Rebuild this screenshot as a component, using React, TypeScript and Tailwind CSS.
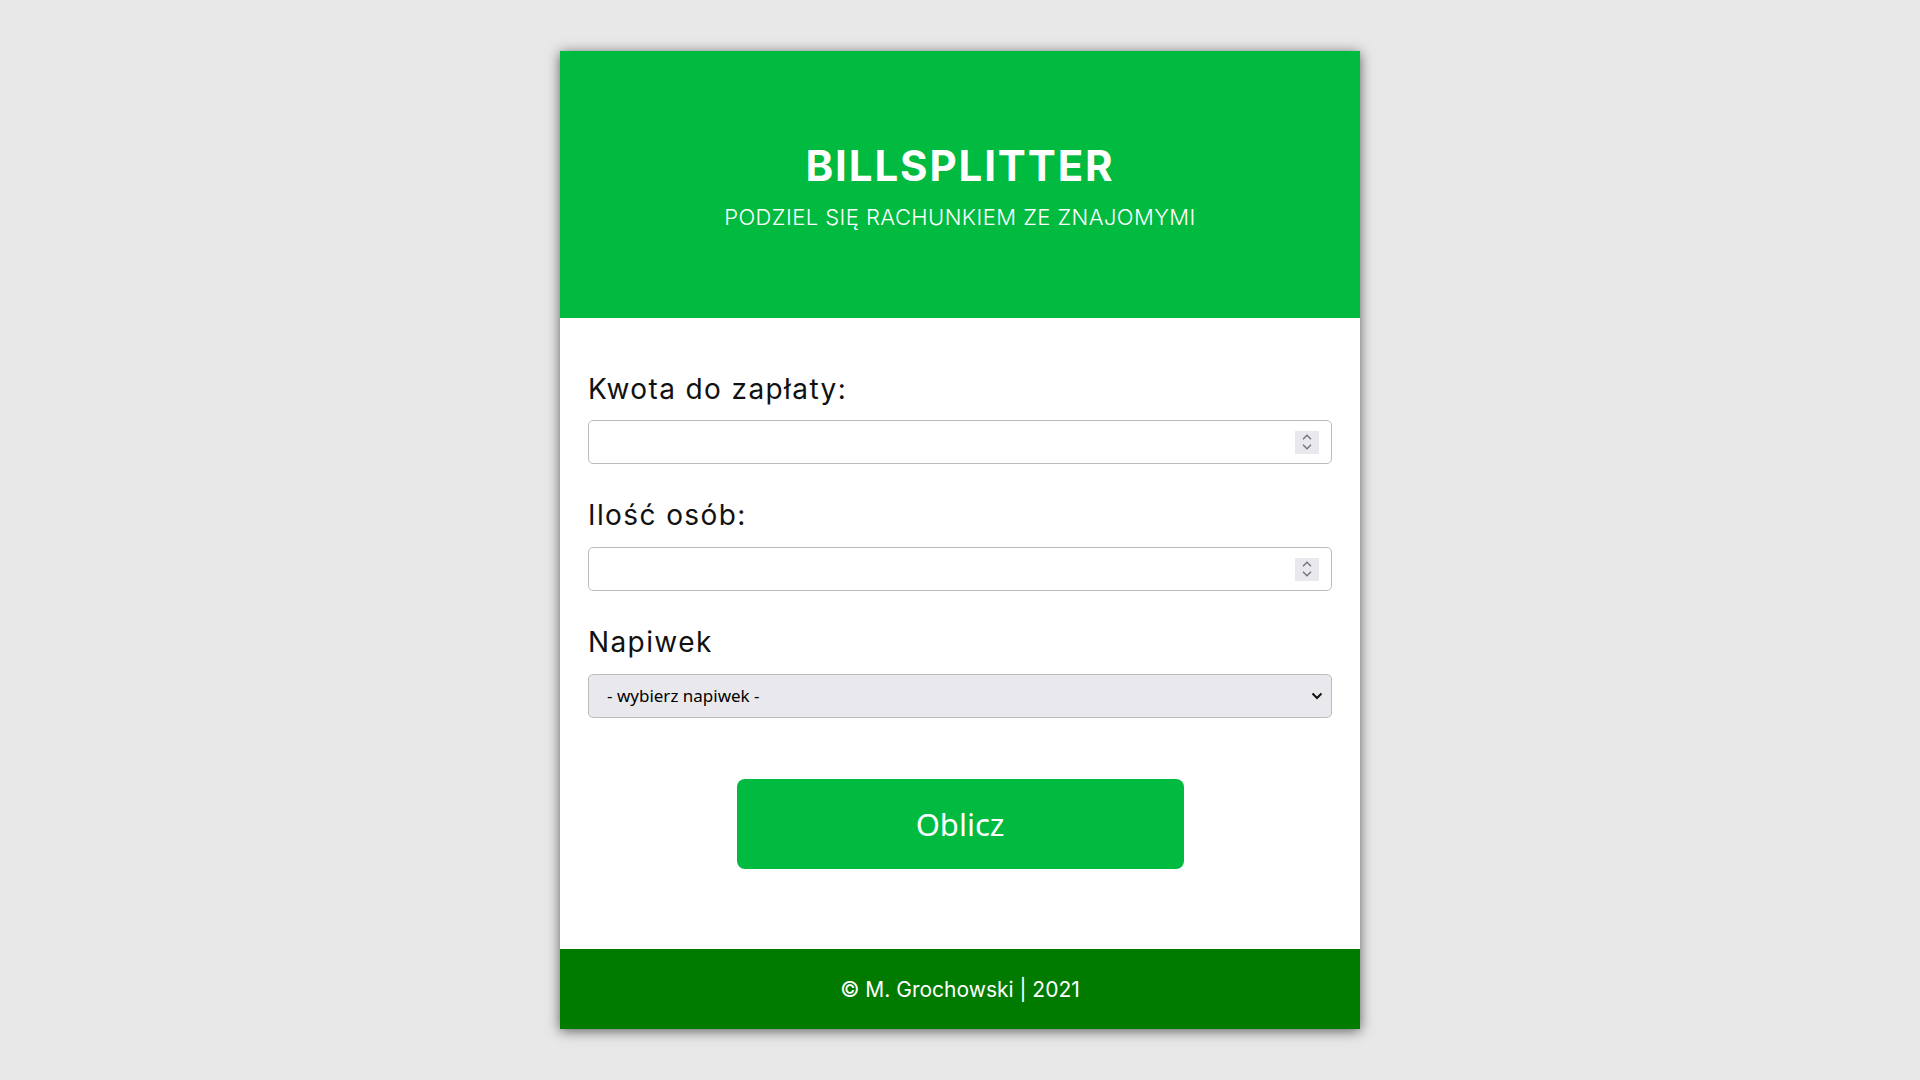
import React from "react";

function Spinner() {
  return (
    <div className="flex h-[23px] w-[24px] flex-col items-center justify-center gap-[4px] bg-[#e9e9ed]">
      <svg width="10" height="6" viewBox="0 0 10 6" fill="none">
        <path d="M1 5.2L5 1.2L9 5.2" stroke="#6f6f78" strokeWidth="1.3" />
      </svg>
      <svg width="10" height="6" viewBox="0 0 10 6" fill="none">
        <path d="M1 0.8L5 4.8L9 0.8" stroke="#6f6f78" strokeWidth="1.3" />
      </svg>
    </div>
  );
}

function NumberField() {
  return (
    <div className="flex h-[44px] items-center rounded-[5px] border border-[#bcbcbc] bg-white pl-3 pr-[12px]">
      <input
        type="text"
        inputMode="decimal"
        className="h-full flex-1 bg-transparent text-[16px] outline-none"
        style={{ fontFamily: "'Noto Sans', sans-serif" }}
      />
      <Spinner />
    </div>
  );
}

export default function App() {
  const mont = { fontFamily: "Inter, 'Noto Sans', sans-serif" };
  const ubu = { fontFamily: "'Noto Sans', 'Open Sans', sans-serif" };
  return (
    <div className="min-h-screen bg-[#e8e8e8] flex justify-center pt-[51px] pb-[51px]">
      <div className="w-[800px] bg-white shadow-[0_2px_12px_rgba(0,0,0,0.6)] flex flex-col">
        <header className="h-[267px] bg-[#00bb3f] flex flex-col items-center pt-[90px] text-white" style={mont}>
          <h1 className="h-[48px] flex items-center text-[42px] font-bold tracking-[0.045em]">BILLSPLITTER</h1>
          <p className="mt-[13px] h-[30px] flex items-center text-[22px] font-light tracking-[0.02em]">
            PODZIEL SIĘ RACHUNKIEM ZE ZNAJOMYMI
          </p>
        </header>
        <main className="px-[28px] pt-[51px] pb-[80px] flex flex-col">
          <label className="h-[40px] flex items-center text-[28px] text-[#111] tracking-[0.05em] mb-[11px]" style={mont}>
            Kwota do zapłaty:
          </label>
          <NumberField />
          <label className="mt-[31px] h-[40px] flex items-center text-[28px] text-[#111] tracking-[0.05em] mb-[12px]" style={mont}>
            Ilość osób:
          </label>
          <NumberField />
          <label className="mt-[31px] h-[40px] flex items-center text-[28px] text-[#111] tracking-[0.05em] mb-[12px]" style={mont}>
            Napiwek
          </label>
          <div className="relative h-[44px]">
            <select
              className="h-full w-full appearance-none rounded-[5px] border border-[#bcbcbc] bg-[#e9e9ed] pl-[18px] text-[17px] text-black outline-none"
              style={ubu}
              defaultValue=""
            >
              <option value="">- wybierz napiwek -</option>
              <option value="0.05">5%</option>
              <option value="0.1">10%</option>
              <option value="0.15">15%</option>
            </select>
            <svg
              className="pointer-events-none absolute right-[9px] top-[18px]"
              width="12"
              height="8"
              viewBox="0 0 12 8"
              fill="none"
            >
              <path d="M1.5 1.5L6 6L10.5 1.5" stroke="#111" strokeWidth="2" />
            </svg>
          </div>
          <div className="mt-[61px] flex justify-center">
            <button
              className="h-[90px] w-[447px] rounded-[8px] bg-[#00bb3f] text-[31px] text-white"
              style={ubu}
            >
              Oblicz
            </button>
          </div>
        </main>
        <footer className="h-[80px] bg-[#007b00] flex items-center justify-center pt-[2px] text-white text-[21px]" style={mont}>
          © M. Grochowski | 2021
        </footer>
      </div>
    </div>
  );
}
